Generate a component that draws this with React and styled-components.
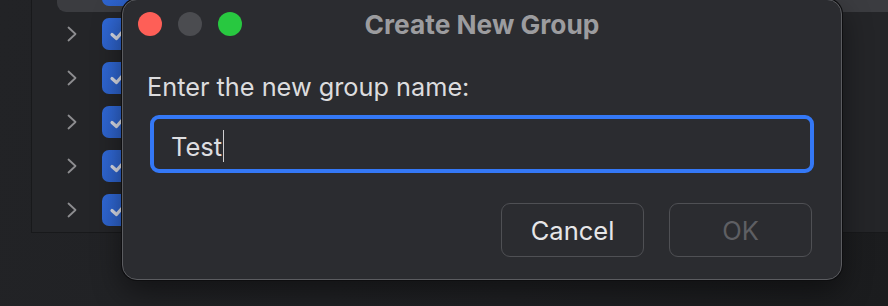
import React from 'react';
import styled, { createGlobalStyle } from 'styled-components';

const GlobalStyle = createGlobalStyle`
  html, body {
    margin: 0;
    padding: 0;
    background: #1f2023;
  }
  * {
    box-sizing: border-box;
  }
`;

const Page = styled.div`
  position: relative;
  width: 888px;
  height: 306px;
  overflow: hidden;
  background: linear-gradient(100deg, #222326 0%, #1f2023 60%, #1b1c1e 100%);
  font-family: Inter, "Liberation Sans", sans-serif;
`;

const TreePanel = styled.div`
  margin-left: 31px;
  height: 233px;
  border-left: 1px solid #18191b;
  border-bottom: 1px solid #18191b;
  background: #242528;
  overflow: hidden;
`;

const TreeList = styled.div`
  margin-top: -32px;
  display: flex;
  flex-direction: column;
`;

const Row = styled.div`
  display: flex;
  align-items: center;
  height: 44px;
  margin-left: 25px;
  padding-left: 10px;
  border-radius: 9px 0 0 9px;
  background: ${(p) => (p.$selected ? '#3b3c40' : 'transparent')};
`;

const Chevron = styled.span`
  display: flex;
  width: 10px;
  height: 16px;
  color: #8d8d90;
`;

const CheckBox = styled.span`
  display: flex;
  align-items: center;
  justify-content: center;
  width: 32px;
  height: 32px;
  margin-left: 25px;
  border-radius: 7px;
  background: linear-gradient(135deg, #3069d8 0%, #2c5fc4 100%);
  color: #d9dce6;
`;

const Dialog = styled.div`
  position: absolute;
  left: 122px;
  top: -1px;
  width: 720px;
  height: 281px;
  background: #2b2c30;
  border: 1px solid #5b5c60;
  border-radius: 15px;
  box-shadow: 0 0 0 1px #0e0e10, 0 12px 30px rgba(0, 0, 0, 0.45);
  display: flex;
  flex-direction: column;
`;

const TitleBar = styled.div`
  display: grid;
  grid-template-columns: 1fr auto 1fr;
  align-items: center;
  height: 48px;
  padding: 0 15px;
`;

const Lights = styled.div`
  display: flex;
  gap: 16px;
`;

const Light = styled.span`
  width: 24px;
  height: 24px;
  border-radius: 50%;
  background: ${(p) => p.$color};
`;

const Title = styled.div`
  font-size: 26.3px;
  font-weight: 700;
  color: #9c9c9f;
`;

const Body = styled.div`
  display: flex;
  flex-direction: column;
  padding: 22px 27px 0 27px;
`;

const Label = styled.div`
  margin-left: -3px;
  font-size: 25.3px;
  line-height: 34px;
  color: #dcdcde;
`;

const InputBox = styled.div`
  display: flex;
  align-items: center;
  height: 58px;
  margin-top: 11px;
  padding-left: 17px;
  padding-top: 4px;
  border: 4px solid #3478f6;
  border-radius: 9px;
  font-size: 25.5px;
  color: #dedee0;
`;

const Caret = styled.span`
  width: 1px;
  height: 32px;
  margin-left: 1px;
  background: #cfcfd1;
`;

const Buttons = styled.div`
  display: flex;
  justify-content: flex-end;
  gap: 25px;
  margin-top: 30px;
  padding-right: 2px;
`;

const Button = styled.button`
  width: 143px;
  height: 54px;
  border: 1px solid #4f5054;
  border-radius: 9px;
  background: #2b2c30;
  font-family: inherit;
  font-size: 25.5px;
  color: ${(p) => (p.disabled ? '#5e5f63' : '#e6e6e8')};
`;

const ChevronIcon = () => (
  <svg width="10" height="16" viewBox="0 0 10 16" fill="none">
    <path d="M1.5 1.5 L8.5 8 L1.5 14.5" stroke="currentColor" strokeWidth="1.8" strokeLinecap="round" strokeLinejoin="round" />
  </svg>
);

const CheckIcon = () => (
  <svg width="20" height="20" viewBox="0 0 20 20" fill="none">
    <path d="M4 10.5 L8.5 14.5 L16 6" stroke="currentColor" strokeWidth="3.2" strokeLinecap="round" strokeLinejoin="round" />
  </svg>
);

const rows = [true, false, false, false, false, false];

export default function App() {
  return (
    <Page>
      <GlobalStyle />
      <TreePanel>
        <TreeList>
          {rows.map((selected, i) => (
            <Row key={i} $selected={selected}>
              <Chevron>
                <ChevronIcon />
              </Chevron>
              <CheckBox>
                <CheckIcon />
              </CheckBox>
            </Row>
          ))}
        </TreeList>
      </TreePanel>
      <Dialog>
        <TitleBar>
          <Lights>
            <Light $color="#fe5f57" />
            <Light $color="#4b4c50" />
            <Light $color="#28c840" />
          </Lights>
          <Title>Create New Group</Title>
          <span />
        </TitleBar>
        <Body>
          <Label>Enter the new group name:</Label>
          <InputBox>
            Test
            <Caret />
          </InputBox>
          <Buttons>
            <Button>Cancel</Button>
            <Button disabled>OK</Button>
          </Buttons>
        </Body>
      </Dialog>
    </Page>
  );
}
